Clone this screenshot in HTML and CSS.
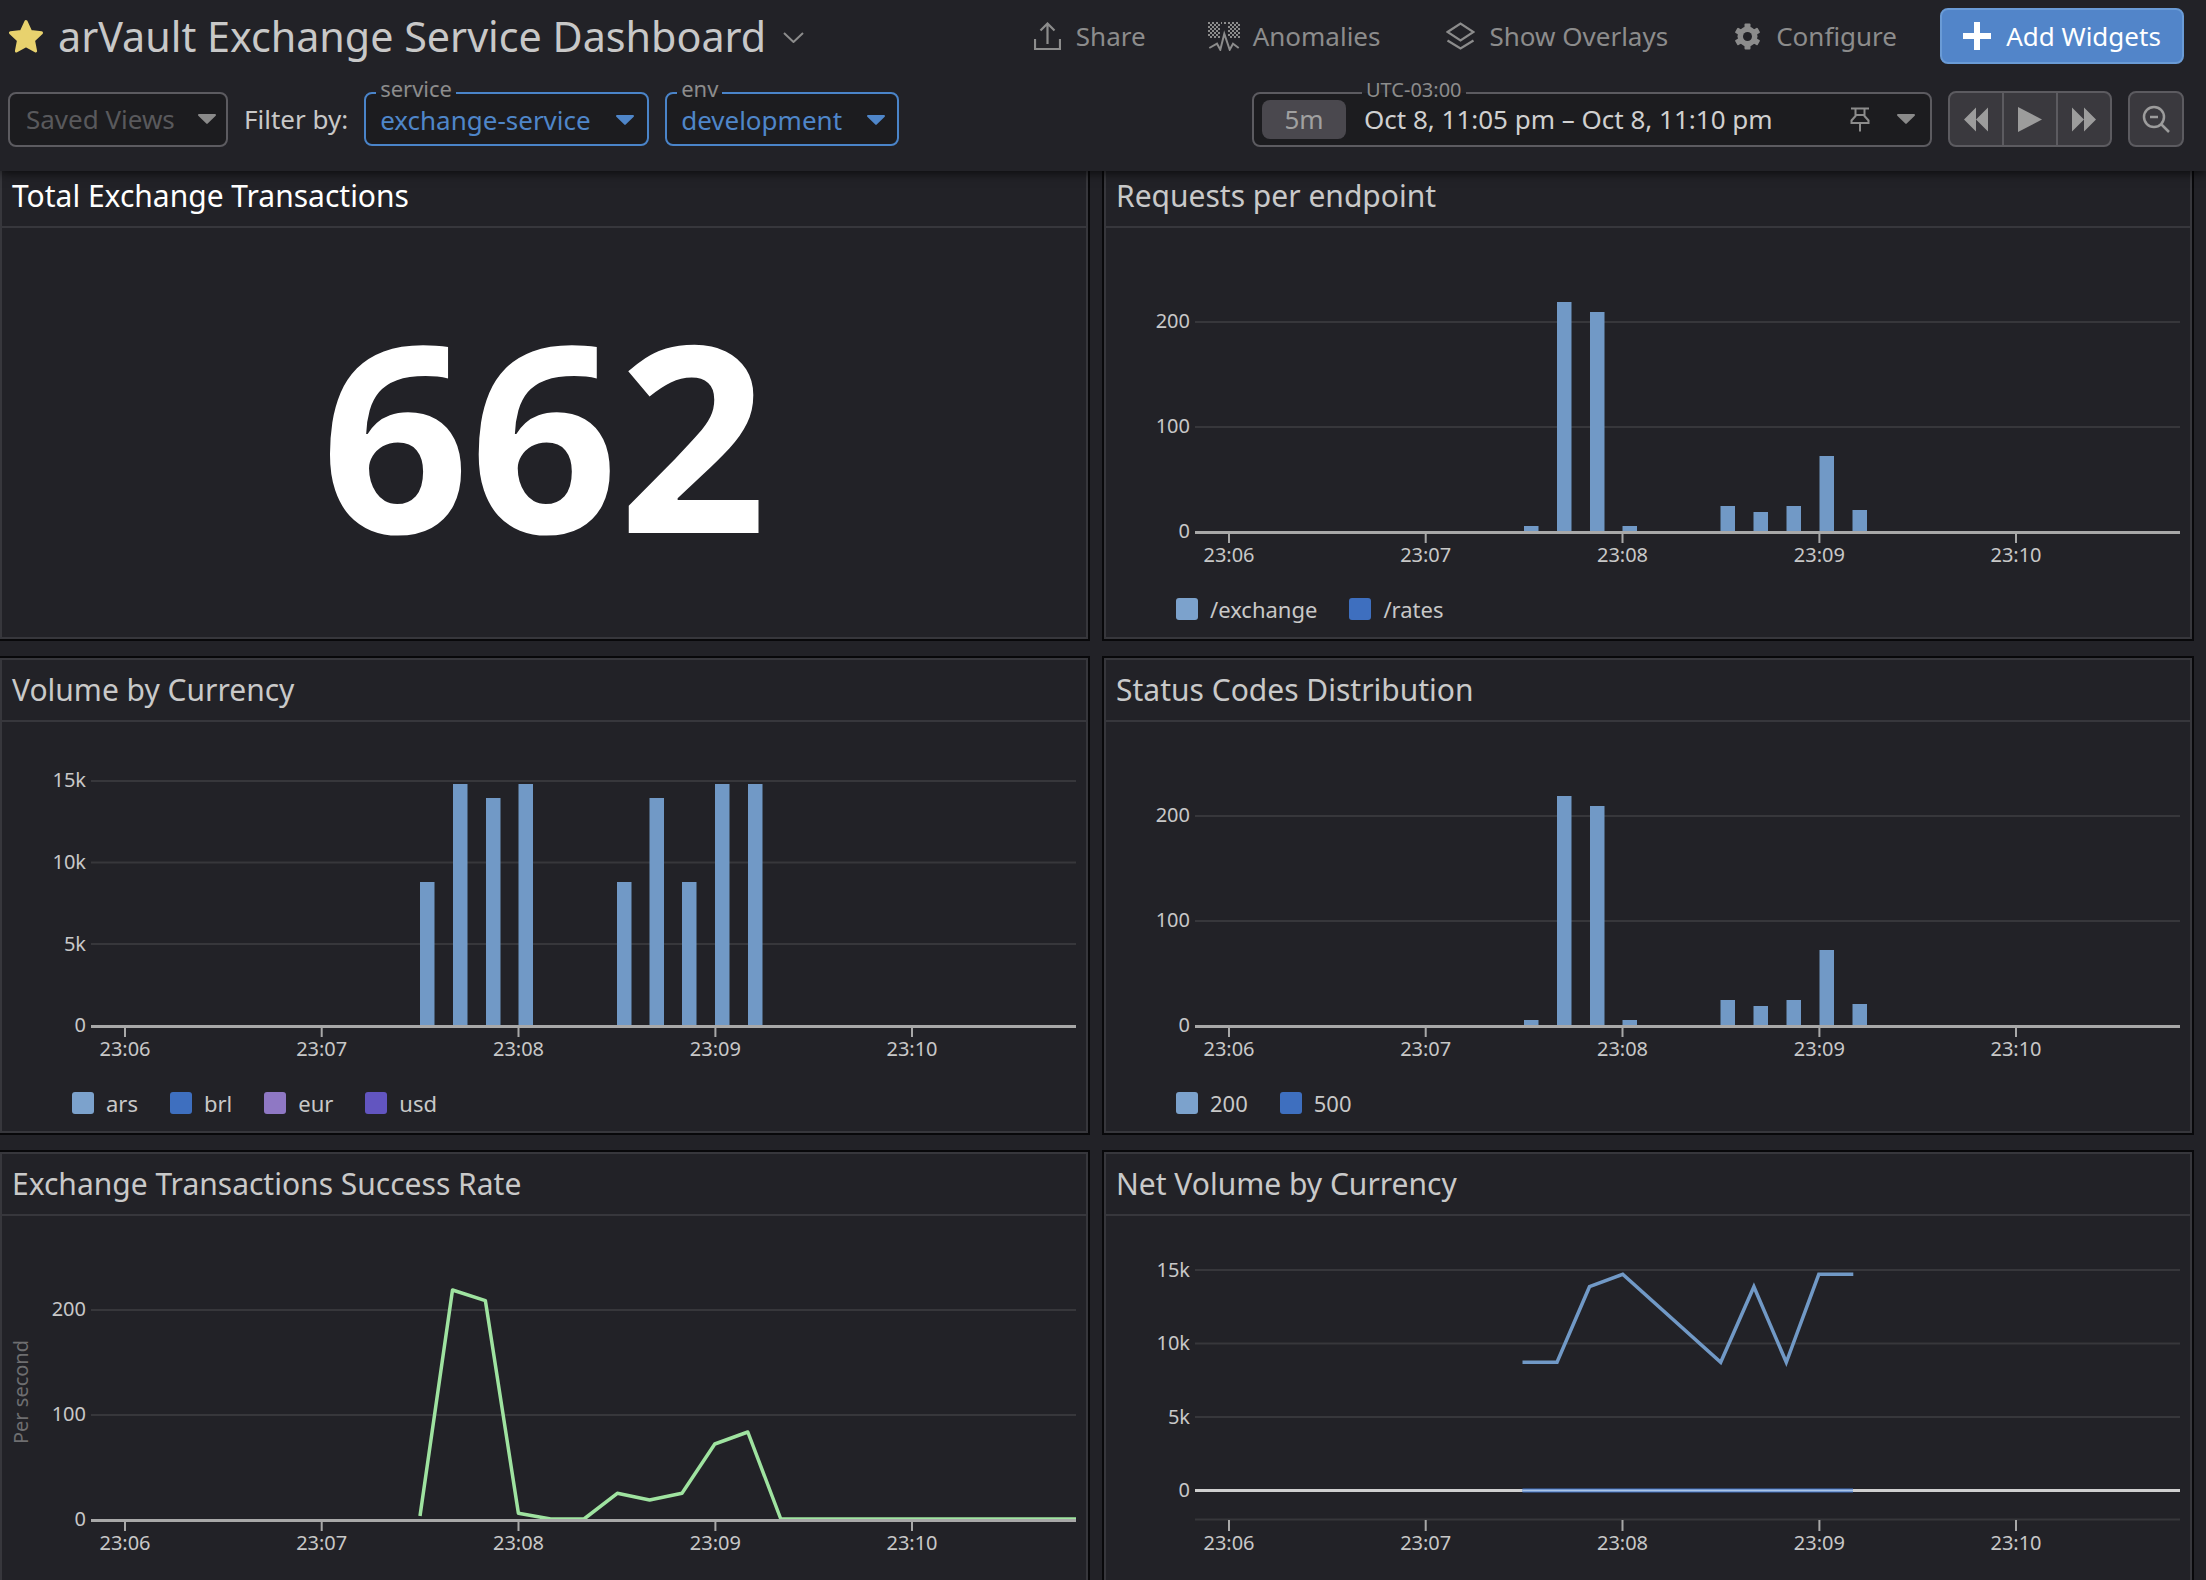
FILE: index.html
```html
<!DOCTYPE html>
<html lang="en">
<head>
<meta charset="utf-8">
<title>arVault Exchange Service Dashboard</title>
<link rel="stylesheet" href="styles.css">
</head>
<body>
<header class="topbar">
  <div class="title-row">
    <svg class="star" viewBox="0 0 36 34"><path d="M18 2.5l4.6 10 10.9 1.3-8 7.5 2.1 10.7-9.6-5.3-9.6 5.3 2.1-10.7-8-7.5 10.9-1.3z"/></svg>
    <h1 class="dash-title">arVault Exchange Service Dashboard</h1>
    <svg class="chevron" viewBox="0 0 21 11"><path d="M1 1l9.5 9L20 1"/></svg>
    <nav class="actions">
      <a class="action share"><svg class="ic" width="27" height="28" viewBox="0 0 27 28"><path d="M1 17v10h25V17M13.500 22V2M6.500 8.500l7-7 7 7"/></svg>Share</a>
      <a class="action anomalies"><svg class="ic-anom" width="32" height="29" viewBox="0 0 32 29"><defs><pattern id="chk" width="4" height="4" patternUnits="userSpaceOnUse"><rect width="2" height="2" fill="#8c8c8c"/><rect x="2" y="2" width="2" height="2" fill="#8c8c8c"/></pattern></defs><path d="M0 0h12v16H0zM20 0h12v16H20zM13 0h6v2h-6z" fill="url(#chk)"/><path class="ic-line" d="M1.300 26L9 21.700l3.300 6 4-16 5.400 16 3.300-6 5.700 4.300"/></svg>Anomalies</a>
      <a class="action overlays"><svg class="ic" width="29" height="28" viewBox="0 0 29 28"><path d="M1.500 10L14.500 1.500 27.500 10l-13 8.500zM1.500 18.500l13 8 13-8"/></svg>Show Overlays</a>
      <a class="action"><svg class="ic-gear" width="27" height="27" viewBox="0 0 27 27"><circle cx="13.500" cy="13.500" r="10"/><rect x="10.500" y="0.500" width="6" height="26" rx="1"/><rect x="10.500" y="0.500" width="6" height="26" rx="1" transform="rotate(60 13.500 13.500)"/><rect x="10.500" y="0.500" width="6" height="26" rx="1" transform="rotate(120 13.500 13.500)"/><circle class="gear-hole" cx="13.500" cy="13.500" r="4.500"/></svg>Configure</a>
    </nav>
    <button class="add-btn"><span class="plus"></span>Add Widgets</button>
  </div>
  <div class="filter-row">
    <div class="select saved"><span class="select-text">Saved Views</span><svg class="caret" viewBox="0 0 18 10"><path d="M1 0h16a1 1 0 0 1 .7 1.700L9.700 9.600a1 1 0 0 1-1.400 0L.3 1.700A1 1 0 0 1 1 0z"/></svg></div>
    <span class="filter-label">Filter by:</span>
    <div class="select tag service"><span class="box-label">service</span><span class="select-text">exchange-service</span><svg class="caret" viewBox="0 0 18 10"><path d="M1 0h16a1 1 0 0 1 .7 1.700L9.700 9.600a1 1 0 0 1-1.400 0L.3 1.700A1 1 0 0 1 1 0z"/></svg></div>
    <div class="select tag env"><span class="box-label">env</span><span class="select-text">development</span><svg class="caret" viewBox="0 0 18 10"><path d="M1 0h16a1 1 0 0 1 .7 1.700L9.700 9.600a1 1 0 0 1-1.400 0L.3 1.700A1 1 0 0 1 1 0z"/></svg></div>
    <div class="timebox">
      <span class="box-label utc">UTC-03:00</span>
      <span class="chip">5m</span>
      <span class="daterange">Oct 8, 11:05 pm – Oct 8, 11:10 pm</span>
      <svg class="pin" width="20" height="25" viewBox="0 0 20 25"><path d="M1 1.500h18M5.500 1.500V9L1.500 13.500v2.500h17v-2.500L14.500 9V1.500M5.500 8h9M10 16v8.500"/></svg>
      <svg class="caret" viewBox="0 0 18 10"><path d="M1 0h16a1 1 0 0 1 .7 1.700L9.700 9.600a1 1 0 0 1-1.400 0L.3 1.700A1 1 0 0 1 1 0z"/></svg>
    </div>
    <div class="btn-group">
      <button class="tbtn"><svg class="tic" width="24" height="25" viewBox="0 0 24 25"><path d="M12 0.500V24.500L0 12.500zM24 0.500V24.500L12 12.500z"/></svg></button>
      <button class="tbtn"><svg class="tic" width="24" height="25" viewBox="0 0 24 25"><path d="M0 0L24 12.500 0 25z"/></svg></button>
      <button class="tbtn"><svg class="tic" width="24" height="25" viewBox="0 0 24 25"><path d="M0 0.500L12 12.500 0 24.500zM12 0.500L24 12.500 12 24.500z"/></svg></button>
    </div>
    <button class="zoom-btn"><svg class="zoom-ic" width="28" height="28" viewBox="0 0 28 28"><circle cx="12" cy="12" r="10"/><path d="M8 12h8M19 19l8 8"/></svg></button>
  </div>
</header>

<main class="grid">
  <section class="panel">
    <h2 class="panel-title active">Total Exchange Transactions</h2>
    <div class="big-value">662</div>
  </section>

  <section class="panel">
    <h2 class="panel-title">Requests per endpoint</h2>
    <div class="panel-body">
      <svg class="chart" viewBox="0 0 1084 370">
        <path class="grid-line" d="M89 94H1074M89 199H1074"/>
        <text class="ylab" x="84" y="100">200</text><text class="ylab" x="84" y="205">100</text><text class="ylab" x="84" y="310">0</text>
        <g class="bars">
          <rect x="418" y="298" width="14.500" height="6"/><rect x="451" y="74" width="14.500" height="230"/><rect x="484" y="84" width="14.500" height="220"/><rect x="516.500" y="298" width="14.500" height="6"/><rect x="614.500" y="278" width="14.500" height="26"/><rect x="647.500" y="284" width="14.500" height="20"/><rect x="680.500" y="278" width="14.500" height="26"/><rect x="713.500" y="228" width="14.500" height="76"/><rect x="746.500" y="282" width="14.500" height="22"/>
        </g>
        <path class="axis" d="M89 304.500H1074"/>
        <path class="tick" d="M123 304V315M319.700 304V315M516.500 304V315M713.400 304V315M910 304V315"/>
        <text class="xlab" x="123" y="334">23:06</text><text class="xlab" x="319.700" y="334">23:07</text><text class="xlab" x="516.500" y="334">23:08</text><text class="xlab" x="713.400" y="334">23:09</text><text class="xlab" x="910" y="334">23:10</text>
      </svg>
      <ul class="legend">
        <li><i class="sw c-ars"></i>/exchange</li>
        <li><i class="sw c-brl"></i>/rates</li>
      </ul>
    </div>
  </section>

  <section class="panel">
    <h2 class="panel-title">Volume by Currency</h2>
    <div class="panel-body">
      <svg class="chart" viewBox="0 0 1084 370">
        <path class="grid-line" d="M89 59H1074M89 140.500H1074M89 222H1074"/>
        <text class="ylab" x="84" y="65">15k</text><text class="ylab" x="84" y="147">10k</text><text class="ylab" x="84" y="229">5k</text><text class="ylab" x="84" y="310">0</text>
        <g class="bars">
          <rect x="418" y="160" width="14.500" height="144"/><rect x="451" y="62" width="14.500" height="242"/><rect x="484" y="76" width="14.500" height="228"/><rect x="516.500" y="62" width="14.500" height="242"/><rect x="615" y="160" width="14.500" height="144"/><rect x="647.500" y="76" width="14.500" height="228"/><rect x="680" y="160" width="14.500" height="144"/><rect x="713" y="62" width="14.500" height="242"/><rect x="746" y="62" width="14.500" height="242"/>
        </g>
        <path class="axis" d="M89 304.500H1074"/>
        <path class="tick" d="M123 304V315M319.700 304V315M516.500 304V315M713.400 304V315M910 304V315"/>
        <text class="xlab" x="123" y="334">23:06</text><text class="xlab" x="319.700" y="334">23:07</text><text class="xlab" x="516.500" y="334">23:08</text><text class="xlab" x="713.400" y="334">23:09</text><text class="xlab" x="910" y="334">23:10</text>
      </svg>
      <ul class="legend">
        <li><i class="sw c-ars"></i>ars</li>
        <li><i class="sw c-brl"></i>brl</li>
        <li><i class="sw c-eur"></i>eur</li>
        <li><i class="sw c-usd"></i>usd</li>
      </ul>
    </div>
  </section>

  <section class="panel">
    <h2 class="panel-title">Status Codes Distribution</h2>
    <div class="panel-body">
      <svg class="chart" viewBox="0 0 1084 370">
        <path class="grid-line" d="M89 94H1074M89 199H1074"/>
        <text class="ylab" x="84" y="100">200</text><text class="ylab" x="84" y="205">100</text><text class="ylab" x="84" y="310">0</text>
        <g class="bars">
          <rect x="418" y="298" width="14.500" height="6"/><rect x="451" y="74" width="14.500" height="230"/><rect x="484" y="84" width="14.500" height="220"/><rect x="516.500" y="298" width="14.500" height="6"/><rect x="614.500" y="278" width="14.500" height="26"/><rect x="647.500" y="284" width="14.500" height="20"/><rect x="680.500" y="278" width="14.500" height="26"/><rect x="713.500" y="228" width="14.500" height="76"/><rect x="746.500" y="282" width="14.500" height="22"/>
        </g>
        <path class="axis" d="M89 304.500H1074"/>
        <path class="tick" d="M123 304V315M319.700 304V315M516.500 304V315M713.400 304V315M910 304V315"/>
        <text class="xlab" x="123" y="334">23:06</text><text class="xlab" x="319.700" y="334">23:07</text><text class="xlab" x="516.500" y="334">23:08</text><text class="xlab" x="713.400" y="334">23:09</text><text class="xlab" x="910" y="334">23:10</text>
      </svg>
      <ul class="legend">
        <li><i class="sw c-ars"></i>200</li>
        <li><i class="sw c-brl"></i>500</li>
      </ul>
    </div>
  </section>

  <section class="panel">
    <h2 class="panel-title">Exchange Transactions Success Rate</h2>
    <div class="panel-body">
      <svg class="chart" viewBox="0 0 1084 370">
        <path class="grid-line" d="M89 94H1074M89 199H1074"/>
        <text class="ylab" x="84" y="100">200</text><text class="ylab" x="84" y="205">100</text><text class="ylab" x="84" y="310">0</text>
        <text class="ytitle" transform="translate(26 176) rotate(-90)">Per second</text>
        <polyline class="line-green" points="418,300 450.500,74 483.400,84.700 516.400,297.300 548.700,303 582,303 615.300,277.300 647.600,284 680,277.300 712.800,228 745.800,216 778.800,303 1074,303"/>
        <path class="axis" d="M89 304.500H1074"/>
        <path class="tick" d="M123 304V315M319.700 304V315M516.500 304V315M713.400 304V315M910 304V315"/>
        <text class="xlab" x="123" y="334">23:06</text><text class="xlab" x="319.700" y="334">23:07</text><text class="xlab" x="516.500" y="334">23:08</text><text class="xlab" x="713.400" y="334">23:09</text><text class="xlab" x="910" y="334">23:10</text>
      </svg>
    </div>
  </section>

  <section class="panel">
    <h2 class="panel-title">Net Volume by Currency</h2>
    <div class="panel-body">
      <svg class="chart" viewBox="0 0 1084 370">
        <path class="grid-line" d="M89 54H1074M89 127.500H1074M89 201H1074M89 303.500H1074"/>
        <text class="ylab" x="84" y="61">15k</text><text class="ylab" x="84" y="134">10k</text><text class="ylab" x="84" y="208">5k</text><text class="ylab" x="84" y="281">0</text>
        <path class="axis zero" d="M89 274.500H1074"/>
        <path class="line-brl" d="M416.500 274.500H747"/>
        <path class="line-ars-thin" d="M416.500 274.500H747"/>
        <polyline class="line-blue" points="416.500,146.300 451,146.300 483.500,70.700 516.700,58.300 614.700,146.300 647.900,70.700 680.300,146.300 712.800,58.300 747.300,58.300"/>
        <path class="tick" d="M123 304V315M319.700 304V315M516.500 304V315M713.400 304V315M910 304V315"/>
        <text class="xlab" x="123" y="334">23:06</text><text class="xlab" x="319.700" y="334">23:07</text><text class="xlab" x="516.500" y="334">23:08</text><text class="xlab" x="713.400" y="334">23:09</text><text class="xlab" x="910" y="334">23:10</text>
      </svg>
    </div>
  </section>
</main>
</body>
</html>
```
FILE: styles.css
```css
* { box-sizing: border-box; }
html, body { margin: 0; height: 1580px; overflow: hidden; }
body {
  background: #222227;
  font-family: "Noto Sans", "Open Sans", sans-serif;
  color: #c8c8c8;
}

/* top bar */
.topbar {
  position: relative;
  z-index: 2;
  height: 171px;
  background: #222227;
  box-shadow: 0 2px 10px rgba(0, 0, 0, .7);
  padding: 8px 22px 0 8px;
}
.title-row { display: flex; align-items: center; height: 56px; }
.star { width: 36px; height: 34px; margin-top: 0; }
.star path { fill: #e8d26e; stroke: #e8d26e; stroke-width: 3; stroke-linejoin: round; }
.dash-title { margin: 0 0 0 14px; font-size: 41.250px; font-weight: 400; line-height: 56px; color: #c8c8c8; white-space: nowrap; }
.chevron { width: 21px; height: 11px; margin-left: 17px; margin-top: 2px; }
.chevron path { fill: none; stroke: #8c8c8c; stroke-width: 2; }
.actions { display: flex; align-items: center; gap: 66px; margin-left: auto; margin-right: 43px; }
.action { display: flex; align-items: center; gap: 15px; font-size: 26px; color: #8c8c8c; white-space: nowrap; }
.action.share { margin-right: -4px; }
.action.anomalies { gap: 13px; }
.action.overlays { gap: 14px; }
.ic { fill: none; stroke: #8c8c8c; stroke-width: 2.200; }
.ic-line { fill: none; stroke: #8c8c8c; stroke-width: 2; }
.ic-gear { fill: #8c8c8c; }
.gear-hole { fill: #222227; }
.add-btn {
  display: flex; align-items: center; justify-content: center; gap: 15px;
  width: 244px; height: 56px;
  background: #5285c9; border: 2px solid #6a9bd6; border-radius: 8px;
  color: #fff; font: 400 26px "Noto Sans", sans-serif;
  padding: 0;
}
.plus { position: relative; width: 28px; height: 28px; }
.plus::before, .plus::after { content: ""; position: absolute; background: #fff; }
.plus::before { left: 11px; top: 0; width: 6px; height: 28px; }
.plus::after { left: 0; top: 11px; width: 28px; height: 6px; }

.filter-row { display: flex; align-items: center; height: 56px; margin-top: 27px; gap: 16px; }
.select {
  position: relative; display: flex; align-items: center; justify-content: space-between;
  height: 55px; background: #1c1c1f; border: 2px solid #5c5b60; border-radius: 8px;
  padding: 0 10px 0 16px; font-size: 26px; white-space: nowrap;
}
.saved { width: 220px; color: #59595c; }
.caret { width: 18px; height: 10px; flex: none; fill: #8a8a8a; }
.filter-label { font-size: 26px; color: #c8c8c8; white-space: nowrap; }
.tag { border-color: #4a84c9; color: #4f86c9; height: 54px; padding-left: 14px; padding-top: 2px; }
.tag .caret { fill: #4f86c9; }
.service { width: 285px; padding-right: 13px; }
.env { width: 234px; padding-right: 12px; }
.box-label {
  position: absolute; top: -18px; left: 10px; padding: 0 4px;
  height: 34px; line-height: 24px;
  font-size: 22px; color: #8c8c8c;
  background: linear-gradient(#222227 0 50%, #1c1c1f 50%);
}
.timebox {
  position: relative; display: flex; align-items: center;
  width: 680px; height: 55px; margin-left: auto;
  background: #1c1c1f; border: 2px solid #5c5b60; border-radius: 8px;
  padding: 0 15px 0 8px;
}
.box-label.utc { left: 108px; font-size: 20px; top: -16px; height: 30px; }
.chip {
  width: 84px; height: 39px; line-height: 38px; text-align: center;
  background: #4a484e; border-radius: 8px; font-size: 26px; color: #a0a0a0;
}
.daterange { margin-left: 18px; font-size: 26px; line-height: 32px; color: #d0d0d0; white-space: nowrap; }
.pin { margin-left: auto; margin-right: 27px; fill: none; stroke: #8c8c8c; stroke-width: 2; }
.btn-group {
  display: flex; width: 164px; height: 56px; flex: none;
  background: #3a393e; border: 2px solid #5c5b60; border-radius: 8px;
}
.tbtn { flex: 1; display: flex; align-items: center; justify-content: center; background: none; border: 0; padding: 0; }
.tbtn + .tbtn { border-left: 2px solid #5c5b60; }
.tic { fill: #9c9c9c; }
.zoom-btn {
  display: flex; align-items: center; justify-content: center;
  width: 56px; height: 56px; flex: none; padding: 0;
  background: #3a393e; border: 2px solid #5c5b60; border-radius: 8px;
}
.zoom-ic { fill: none; stroke: #9c9c9c; stroke-width: 2.500; }

/* panels */
.grid {
  display: grid;
  grid-template-columns: 1092px 1092px;
  grid-auto-rows: 479px;
  column-gap: 12px; row-gap: 15px;
  margin: -9px 0 0 -2px;
}
.panel {
  display: flex; flex-direction: column;
  border: 2px solid #08080a;
  box-shadow: inset 0 0 0 2px #37373c;
  background: #222227;
  overflow: hidden;
}
.panel-title {
  flex: none; margin: 0; height: 64px; padding-left: 12px;
  border-bottom: 2px solid #37373c;
  font-size: 30px; font-weight: 400; line-height: 63px; color: #c9c9c9;
  white-space: nowrap;
}
.panel-title.active { color: #fff; }
.big-value {
  flex: 1; display: flex; align-items: center; justify-content: center;
  padding-bottom: 4px;
  font-size: 260px; font-weight: 700; line-height: 1; color: #fff;
}
.panel-body { padding: 0 2px; }
.chart { display: block; width: 1084px; height: 370px; }
.grid-line { fill: none; stroke: #37373b; stroke-width: 2; }
.axis { fill: none; stroke: #a8a8a8; stroke-width: 3; }
.axis.zero { stroke: #cfcfcf; }
.tick { fill: none; stroke: #a8a8a8; stroke-width: 2; }
.bars { fill: #7199c6; }
.ylab, .xlab { font-size: 20px; fill: #c8c8c8; }
.ylab { text-anchor: end; }
.xlab { text-anchor: middle; }
.ytitle { font-size: 20px; fill: #6e6e70; text-anchor: middle; }
.line-green { fill: none; stroke: #9fe3a0; stroke-width: 3.500; stroke-linejoin: round; }
.line-blue { fill: none; stroke: #7199c6; stroke-width: 3.500; }
.line-brl { fill: none; stroke: #3e6fbf; stroke-width: 4; }
.line-ars-thin { fill: none; stroke: #a9c4e6; stroke-width: 2; }

.legend {
  display: flex; gap: 32px; list-style: none; margin: 0; padding: 0 0 0 70px;
  font-size: 22px; line-height: 22px; color: #c8c8c8;
}
.legend li { display: flex; align-items: center; gap: 12px; }
.sw { display: block; width: 22px; height: 22px; border-radius: 3px; }
.c-ars { background: #7ca2cc; }
.c-brl { background: #3e6fbf; }
.c-eur { background: #8f78c4; }
.c-usd { background: #6255c0; }
```
